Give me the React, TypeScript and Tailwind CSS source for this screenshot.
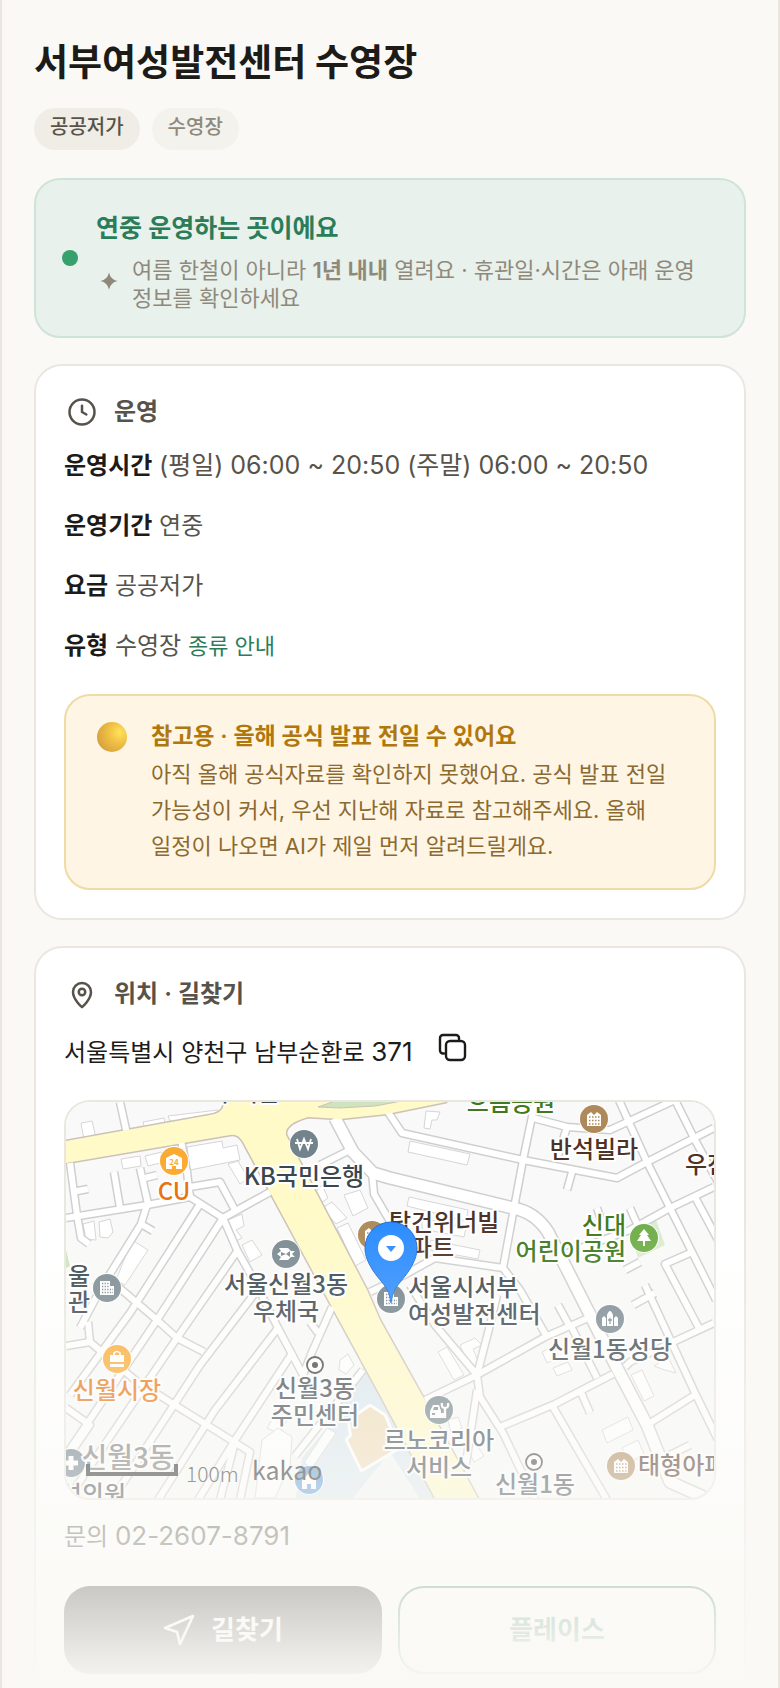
import React from 'react'

type Point = {
    x: number;
    y: number;
}

type LabelProps = Point & {
    text: string;
    color: string;
    anchor?: 'start' | 'middle' | 'end';
    size?: number;
}

const SLATE = '#3b474f';
const BROWN = '#4f3226';
const GREEN = '#3f7a22';
const ORANGE = '#e87312';

const YELLOW_ROAD =
    'M10 52 L160 25 Q174 23 174 12 V6 H400 L396 12 L337 24 L290 29 L258 27 Q234 34 236 45 L317 200 L330 230 L373 307 L430 412 H387 L330 305 L282 217 L193 52 Q188 43 180 45 L10 74Z';

const ROADS = [
    'M16 128 L97 115 L140 107 L173 128 L220 102',
    'M20 73 L27 125 L31 148 L39 154',
    'M64 82 L70 118',
    'M22 102 L38 99',
    'M90 78 L98 114',
    'M95 88 L107 85',
    'M70 12 L77 44',
    'M97 115 L91 134 L50 200 L30 238',
    'M91 134 L103 141',
    'M131 50 L137 82 L140 107',
    'M140 97 L170 92 L185 120',
    'M173 128 L187 160 L205 192 L228 238 L253 285',
    'M150 114 L80 223 L20 305',
    'M173 128 L107 230 L16 365',
    'M188 160 L127 248 L24 400',
    'M215 190 L150 275 L62 410',
    'M228 238 L165 320 L108 410',
    'M243 262 L185 350 L148 410',
    'M66 195 L107 230 L127 248 L154 262',
    'M38 232 L40 252 L16 256',
    'M40 252 L85 290 L120 312 L165 340 L200 362 L190 410',
    'M16 318 L40 335 L16 370',
    'M282 217 L262 262 L253 285',
    'M260 232 L268 243',
    'M313 280 L245 366',
    'M185 352 L170 410',
    'M338 22 L352 43 L473 70 L567 88 L597 72 L664 38',
    'M485 12 L473 70 L464 118 L453 178',
    'M483 28 L517 37 L560 40 L625 10',
    'M517 37 L508 66',
    'M522 82 L517 100',
    'M568 8 L597 72 L620 118 L666 210',
    'M625 10 L645 50 L668 92',
    'M664 97 L620 118 L580 140 L512 165',
    'M580 118 L588 136',
    'M547 118 L552 132',
    'M645 107 L668 150',
    'M320 202 L345 190 L385 168 L453 178 L470 200 L497 247',
    'M640 163 L615 174 L650 240',
    'M575 277 L580 272 L664 233',
    'M575 180 L590 172',
    'M375 310 L427 285 L385 235 L360 195',
    'M427 285 L440 235 L447 205',
    'M427 285 L495 247 L545 225',
    'M427 285 L430 307 L453 343 L485 410',
    'M427 300 L415 380',
    'M450 337 L505 314 L563 284',
    'M503 317 L557 410',
    'M530 300 L540 323',
    'M595 195 L645 303 L668 350',
    'M648 303 L597 335',
    'M522 238 L547 288',
    'M508 215 L520 237',
    'M583 215 L605 203',
    'M640 355 L610 370',
    'M300 60 L270 75',
    'M322 82 L324 104 L345 140',
];

const WIDE_ROADS = [
    'M285 28 L303 62 L323 83 L340 88 L463 118 Q485 122 498 142 L530 205 L567 278 L597 335 L620 392 L660 410',
];

const BUILDINGS = [
    'M31 33 L42 31 L47 52 L35 55Z',
    'M93 32 L114 28 L116 38 L96 43Z',
    'M118 26 L168 20 V30 L150 34 L120 31Z',
    'M71 69 L90 66 L91 76 L73 79Z',
    'M95 66 L112 62 L114 72 L98 76Z',
    'M137 57 L172 51 L173 58 L187 55 L190 70 L140 80Z',
    'M178 74 L188 71 L198 88 L190 94Z',
    'M33 134 L44 131 L46 150 L36 149Z',
    'M49 132 L60 129 L63 142 L58 148 L50 147Z',
    'M82 150 L98 160 L75 195 L66 190Z',
    'M178 130 L192 124 L194 136 L186 140 L192 148 L184 152Z',
    'M192 155 L202 150 L212 165 L200 172Z',
    'M294 105 L310 100 L318 118 L303 126Z',
    'M263 105 L272 95 L278 108 L270 114Z',
    'M272 118 L282 112 L297 128 L286 134Z',
    'M287 138 L298 133 L316 170 L305 176Z',
    'M376 21 L390 22 L387 30 L382 30 L380 39 L374 38Z',
    'M360 51 L420 64 L417 75 L358 62Z',
    'M359 107 L418 120 L416 131 L357 116Z',
    'M372 128 L416 138 L414 147 L372 139Z',
    'M380 150 L430 160 L428 169 L380 160Z',
    'M388 262 L397 257 L414 285 L404 290Z',
    'M410 255 L425 248 L432 255 L423 259 L429 273 L420 278Z',
    'M492 262 L504 256 L508 268 L497 273Z',
    'M503 278 L518 272 L522 280 L507 286Z',
    'M581 285 L592 280 L604 306 L594 311Z',
    'M604 276 L618 267 L626 283 L615 280Z',
    'M552 340 L578 327 L583 340 L557 353Z',
    'M572 358 L588 350 L594 364 L580 372Z',
    'M230 317 L241 323 L229 344 L217 338Z',
    'M212 350 L228 338 L242 347 L240 375 L225 408 L205 408Z',
    'M277 338 L286 343 L262 378 L254 373Z',
    'M290 270 L298 264 L304 275 L296 284 L289 280Z',
    'M398 330 L408 327 L412 338 L401 343Z',
    'M418 360 L426 354 L434 366 L424 372Z',
];

const Label = ({ x, y, text, color, anchor = 'middle', size = 24 }: LabelProps) => (
    <text
        x={x}
        y={y}
        fill={color}
        fontSize={size}
        fontWeight={500}
        textAnchor={anchor}
        stroke="#fff"
        strokeWidth={4}
        strokeLinejoin="round"
        paintOrder="stroke"
    >
        {text}
    </text>
)

const Poi = ({ x, y, color, children }: Point & { color: string; children?: React.ReactNode }) => (
    <g transform={`translate(${x} ${y})`}>
        <circle r={15} fill="#fff" />
        <circle r={14} fill={color} />
        {children}
    </g>
)

const Apartment = ({ color }: { color: string }) => (
    <>
        <path d="M-7 7 V-4 L-3 -7 L0 -4 L3 -7 L7 -4 V7Z" fill="#fff" />
        <path d="M-5 -2 H6 M-5 1.500 H6 M-5 5 H6" stroke={color} strokeWidth={1.5} strokeDasharray="1.5 1.5" />
    </>
)

const Office = ({ color }: { color: string }) => (
    <>
        <path d="M-7 7 V-7 H3 V-2 H7 V7Z" fill="#fff" />
        <path d="M-5 -4.500 H2 M-5 -1.500 H2 M-5 1.500 H6 M-5 4.500 H6" stroke={color} strokeWidth={1.3} strokeDasharray="1.3 1.3" />
    </>
)

const Dot = ({ x, y }: Point) => (
    <g transform={`translate(${x} ${y})`}>
        <circle r={8} fill="#fff" stroke="#3c3c3c" strokeWidth={1.8} />
        <circle r={3} fill="#3c3c3c" />
    </g>
)

const LocationMap = () => (
    <svg
        className="block h-full w-full font-[Noto_Sans_CJK_KR,sans-serif]"
        viewBox="16 12 648 396"
        preserveAspectRatio="xMidYMid slice"
        role="img"
        aria-label="지도"
    >
        <rect x={-400} y={-100} width={1500} height={700} fill="#f9f9f9" />
        <path d="M313 277 L387 412 H245 L252 368 L283 330Z" fill="#dce8f0" />
        <path d="M340 362 L372 412 H300Z" fill="#f4f6f8" />
        <path d="M16 160 L20 176 L16 178Z" fill="#cfe3bf" />
        <path d="M600 134 L606 130 L615 155 L588 168 L583 152Z" fill="#dcecd0" />
        <g fill="#fff" stroke="#d6d6d6" strokeWidth={1}>
            {BUILDINGS.map((d) => <path key={d} d={d} />)}
        </g>
        <g fill="none" stroke="#cfcfcf" strokeWidth={9} strokeLinejoin="round">
            {ROADS.map((d) => <path key={d} d={d} />)}
            {WIDE_ROADS.map((d) => <path key={d} d={d} strokeWidth={14} />)}
            <path d={YELLOW_ROAD} stroke="#cbc2b8" strokeWidth={3} />
        </g>
        <g fill="none" stroke="#fff" strokeWidth={6} strokeLinejoin="round">
            {ROADS.map((d) => <path key={d} d={d} />)}
            {WIDE_ROADS.map((d) => <path key={d} d={d} strokeWidth={11} />)}
        </g>
        <path d={YELLOW_ROAD} fill="#fffac8" />
        <path d="M268 17 L285 11 H352 L325 16 L290 18Z" fill="#cfe3bf" stroke="#cbc2b8" strokeWidth={1} />
        <path
            d="M320 317 L334 326 L347 358 L312 379 L298 350 L302 346 L300 331Z"
            fill="#efdcb8"
            stroke="#fff"
            strokeWidth={6}
            strokeLinejoin="round"
            paintOrder="stroke"
        />

        <Poi x={124} y={71} color="#fbab34">
            <path d="M0 -7 L8 -3 V8 H2 V5 H-2 V8 H-8 V-3Z" fill="#fff" />
            <text y={4} fontSize={8} fontWeight={700} textAnchor="middle" fill="#fbab34">24</text>
        </Poi>
        <Poi x={254} y={54} color="#73838b">
            <path d="M-7 -5 L-4 5 L0 -5 L4 5 L7 -5 M-9 -1 H9" fill="none" stroke="#fff" strokeWidth={1.8} />
        </Poi>
        <Poi x={236} y={164} color="#7c8b93">
            <path d="M-9 0 L-5 -3 L-7 -6 H2 L5 -3 H9 L6 0 L9 3 H5 L2 6 H-7 L-5 3Z" fill="#fff" />
            <path d="M-5 -2 L0 0 L-5 2Z M4 -3 L0 0 L4 3Z" fill="#7c8b93" />
        </Poi>
        <Poi x={57} y={198} color="#7c8b93"><Office color="#7c8b93" /></Poi>
        <Poi x={67} y={269} color="#fbab34">
            <path d="M-7 -4 H7 V3 H-7Z M-7 5 H7 V8 H-7Z" fill="#fff" />
            <path d="M-3 -3 V-6 Q0 -9 3 -6 V-3" fill="none" stroke="#fff" strokeWidth={1.6} />
        </Poi>
        <Poi x={21} y={373} color="#6b7d88">
            <path d="M-7 0 H7 M0 -7 V7" stroke="#fff" strokeWidth={5} />
        </Poi>
        <Poi x={259} y={390} color="#5b9bd8">
            <path d="M-7 9 V0 H-4 V-3 L0 -7 L4 -3 V0 H7 V9 H2 V4 H-2 V9Z" fill="#fff" />
        </Poi>
        <Poi x={544} y={29} color="#ae8a5b"><Apartment color="#ae8a5b" /></Poi>
        <Poi x={322} y={145} color="#ae8a5b"><Apartment color="#ae8a5b" /></Poi>
        <Poi x={594} y={148} color="#70ae4a">
            <path d="M0 -9 L5 -3 H3 L7 3 H1 V8 H-1 V3 H-7 L-3 -3 H-5Z" fill="#fff" />
        </Poi>
        <Poi x={341} y={209} color="#73838b"><Office color="#73838b" /></Poi>
        <Poi x={560} y={229} color="#7c8b93">
            <path d="M-8 7 V-1 L-6 -3 L-4 -1 V7Z M8 7 V-1 L6 -3 L4 -1 V7Z M-3 7 V-4 Q0 -12 3 -4 V7Z" fill="#fff" />
            <path d="M0 -1 V5 M-2 1 H2" stroke="#7c8b93" strokeWidth={1.3} />
        </Poi>
        <Poi x={389} y={320} color="#73838b">
            <path d="M-9 8 V1 L-6 -5 H0 L2 1 V3 H5 V8Z" fill="#fff" />
            <path d="M-6 0 L-5 -3 H-1 V0Z M-7 3 H-4 V5 H-7Z" fill="#73838b" />
            <path d="M6 8 V-2 M3 -7 Q2 -2 6 -2 Q10 -2 9 -7" fill="none" stroke="#fff" strokeWidth={2.4} />
        </Poi>
        <Poi x={571} y={376} color="#ae8a5b"><Apartment color="#ae8a5b" /></Poi>
        <Dot x={265} y={275} />
        <Dot x={484} y={372} />

        <Label x={197} y={11} text="우리은" color={SLATE} />
        <Label x={254} y={95} text="KB국민은행" color={SLATE} />
        <Label x={124} y={110} text="CU" color={ORANGE} />
        <Label x={236} y={203} text="서울신월3동" color={SLATE} />
        <Label x={236} y={230} text="우체국" color={SLATE} />
        <Label x={18} y={195} text="울" color={SLATE} anchor="start" />
        <Label x={18} y={221} text="관" color={SLATE} anchor="start" />
        <Label x={67} y={309} text="신월시장" color={ORANGE} />
        <Label x={265} y={307} text="신월3동" color={SLATE} />
        <Label x={265} y={334} text="주민센터" color={SLATE} />
        <Label x={78} y={378} text="신월3동" color="#777" size={28} />
        <Label x={76} y={413} text="석의원" color={SLATE} anchor="end" />
        <Label x={461} y={21} text="으름공원" color={GREEN} />
        <Label x={544} y={68} text="반석빌라" color={BROWN} />
        <Label x={635} y={83} text="우진" color={BROWN} anchor="start" />
        <Label x={339} y={141} text="탑건위너빌" color={BROWN} anchor="start" />
        <Label x={404} y={166} text="아파트" color={BROWN} anchor="end" />
        <Label x={576} y={144} text="신대" color={GREEN} anchor="end" />
        <Label x={576} y={170} text="어린이공원" color={GREEN} anchor="end" />
        <Label x={358} y={206} text="서울시서부" color={SLATE} anchor="start" />
        <Label x={358} y={233} text="여성발전센터" color={SLATE} anchor="start" />
        <Label x={560} y={268} text="신월1동성당" color={SLATE} />
        <Label x={389} y={359} text="르노코리아" color={SLATE} />
        <Label x={389} y={386} text="서비스" color={SLATE} />
        <Label x={485} y={403} text="신월1동" color={SLATE} />
        <Label x={588} y={384} text="태형아파트" color={BROWN} anchor="start" />

        <path
            d="M341 213 C339 196 330 192 322 179 C318 172 315 166 315 158 A26 26 0 0 1 367 158 C367 166 364 172 360 179 C352 192 343 196 341 213Z"
            fill="#2b8cff"
            stroke="#1f6fd6"
            strokeWidth={1}
        />
        <circle cx={341} cy={158} r={13} fill="#fff" />
        <path d="M336 156 H346 L341 162Z" fill="#2b8cff" />

        <path d="M38 374 V384 H126 V374" fill="none" stroke="#222" strokeWidth={4} />
        <text x={136} y={392} fontSize={21} fontWeight={300} fill="#222">100m</text>
        <text x={202} y={390} fontSize={25} fill="#222">kakao</text>
    </svg>
)

const CardTitle = ({ icon, children }: { icon: React.ReactNode; children: React.ReactNode }) => (
    <h2 className="flex h-9 items-center gap-3.5 text-2xl font-semibold text-[#57534b]">
        <span className="flex w-9 justify-center">{icon}</span>
        {children}
    </h2>
)

const InfoRow = ({ label, children }: { label: string; children: React.ReactNode }) => (
    <p className="text-[#57534b]">
        <strong className="font-semibold text-[#1c1b18]">{label}</strong> {children}
    </p>
)

const ClockIcon = () => (
    <svg className="size-[30px]" viewBox="0 0 24 24" fill="none" stroke="currentColor" strokeWidth={2} strokeLinecap="round" strokeLinejoin="round">
        <circle cx="12" cy="12" r="10" />
        <path d="M12 7v5l3.500 2" />
    </svg>
)

const PinIcon = () => (
    <svg className="size-[30px]" viewBox="0 0 24 24" fill="none" stroke="currentColor" strokeWidth={2} strokeLinecap="round" strokeLinejoin="round">
        <path d="M12 22.500C12 22.500 4.800 16.500 4.800 10.400a7.200 7.200 0 0 1 14.400 0C19.200 16.500 12 22.500 12 22.500z" />
        <circle cx="12" cy="10.400" r="2.600" />
    </svg>
)

const CopyIcon = () => (
    <svg className="size-8" viewBox="0 0 32 32" fill="none" stroke="currentColor" strokeWidth={2.4} strokeLinecap="round" strokeLinejoin="round">
        <rect x="9" y="9" width="19" height="19" rx="4" />
        <path d="M7 21.500H6a3 3 0 0 1-3-3V6a3 3 0 0 1 3-3h13a3 3 0 0 1 3 3v1" />
    </svg>
)

const App = () => {
    const city = '서울특별시 양천구 남부순환로';
    const streetNumber = '371';

    const onCopy = () => navigator.clipboard.writeText(`${city} ${streetNumber}`);

    return (
        <main className="relative border-x-2 border-[#e9e7e0] bg-[#faf9f5] px-8 pt-9 font-[Inter,Noto_Sans_CJK_KR,sans-serif] text-2xl/10 text-[#1c1b18]">
            <h1 className="text-[37px]/[54px] font-bold">서부여성발전센터 수영장</h1>
            <div className="mt-[18px] flex gap-3 text-xl font-medium">
                <span className="h-[42px] rounded-full bg-[#efede6] px-4 leading-[38px] text-[#57534b]">공공저가</span>
                <span className="h-[42px] rounded-full bg-[#f3f2ed] px-4 leading-[38px] text-[#8f897c]">수영장</span>
            </div>

            <section className="mt-7 flex items-center gap-[18px] rounded-[26px] border-2 border-[#cfe4d8] bg-[#e8f1eb] px-[26px] py-6">
                <span className="size-4 shrink-0 rounded-full bg-[#36a16c]" />
                <div>
                    <h2 className="text-[25px]/[48px] font-semibold text-[#2b7d59]">연중 운영하는 곳이에요</h2>
                    <div className="mt-1 flex items-center gap-2.5 text-[#8f897c]">
                        <svg className="w-[26px] shrink-0" viewBox="0 0 26 26" fill="currentColor">
                            <path d="M13 1.500 Q14.500 8.500 21.500 10 Q14.500 11.500 13 18.500 Q11.500 11.500 4.500 10 Q11.500 8.500 13 1.500Z" />
                        </svg>
                        <p className="text-[22px]/7 break-keep">
                            여름 한철이 아니라 <strong className="font-semibold">1년 내내</strong> 열려요 · 휴관일·시간은 아래 운영 정보를 확인하세요
                        </p>
                    </div>
                </div>
            </section>

            <section className="mt-[26px] rounded-[28px] border-2 border-[#e9e7e0] bg-white p-7">
                <CardTitle icon={<ClockIcon />}>운영</CardTitle>
                <div className="mt-4 flex flex-col gap-5">
                    <InfoRow label="운영시간">
                        <span className="text-[25px]/8">(평일) 06:00 ~ 20:50 (주말) 06:00 ~ 20:50</span>
                    </InfoRow>
                    <InfoRow label="운영기간">연중</InfoRow>
                    <InfoRow label="요금">공공저가</InfoRow>
                    <InfoRow label="유형">
                        수영장 <a href="#types" className="text-[22px]/8 text-[#2b7d59]">종류 안내</a>
                    </InfoRow>
                </div>
                <div className="mt-7 flex gap-6 rounded-[26px] border-2 border-[#efdba5] bg-[#fff5e5] px-[31px] py-6">
                    <span className="mt-0.5 size-[30px] shrink-0 rounded-full bg-[radial-gradient(circle_at_75%_35%,#ffe45c,#f3c548_30%,#d9a53c_75%,#d9695c)]" />
                    <div className="break-keep">
                        <h3 className="text-[23px]/8 font-semibold text-[#b0780c]">참고용 · 올해 공식 발표 전일 수 있어요</h3>
                        <p className="mt-1 text-[22px]/9 text-[#8b6a30]">
                            아직 올해 공식자료를 확인하지 못했어요. 공식 발표 전일 가능성이 커서, 우선 지난해 자료로 참고해주세요. 올해 일정이 나오면 AI가 제일 먼저 알려드릴게요.
                        </p>
                    </div>
                </div>
            </section>

            <section className="mt-[26px] rounded-t-[28px] border-2 border-b-0 border-[#e9e7e0] bg-white px-7 pt-7 pb-3.5">
                <CardTitle icon={<PinIcon />}>위치 · 길찾기</CardTitle>
                <div className="mt-5 flex h-10 items-center gap-6">
                    <p>
                        {city} <span className="text-[26px]">{streetNumber}</span>
                    </p>
                    <button type="button" aria-label="주소 복사" className="pb-2" onClick={onCopy}>
                        <CopyIcon />
                    </button>
                </div>
                <div className="mt-7 h-[400px] overflow-hidden rounded-[26px] border-2 border-[#e9e7e0]">
                    <LocationMap />
                </div>
                <p className="mt-4 h-10 text-[#57534b]">
                    문의 <a href="tel:02-2607-8791" className="text-[26px]">02-2607-8791</a>
                </p>
                <div className="mt-[30px] grid grid-cols-2 gap-4 text-[26px] font-semibold">
                    <a href="#directions" className="flex h-[88px] items-center justify-center gap-4 rounded-[26px] bg-[#1c1b18] text-white">
                        <svg className="size-8" viewBox="0 0 32 32" fill="none" stroke="currentColor" strokeWidth={2.6} strokeLinejoin="round">
                            <path d="M30 2 L17 30 L14 18 L2 14Z" />
                        </svg>
                        길찾기
                    </a>
                    <a href="#place" className="flex h-[88px] items-center justify-center rounded-[26px] border-2 border-[#2b7d59] text-[#2b7d59]">
                        플레이스
                    </a>
                </div>
            </section>

            <div className="pointer-events-none absolute inset-x-0 bottom-0 h-[468px] bg-linear-to-b from-[#faf9f5]/0 to-[#faf9f5]" />
        </main>
    )
}

export default App
